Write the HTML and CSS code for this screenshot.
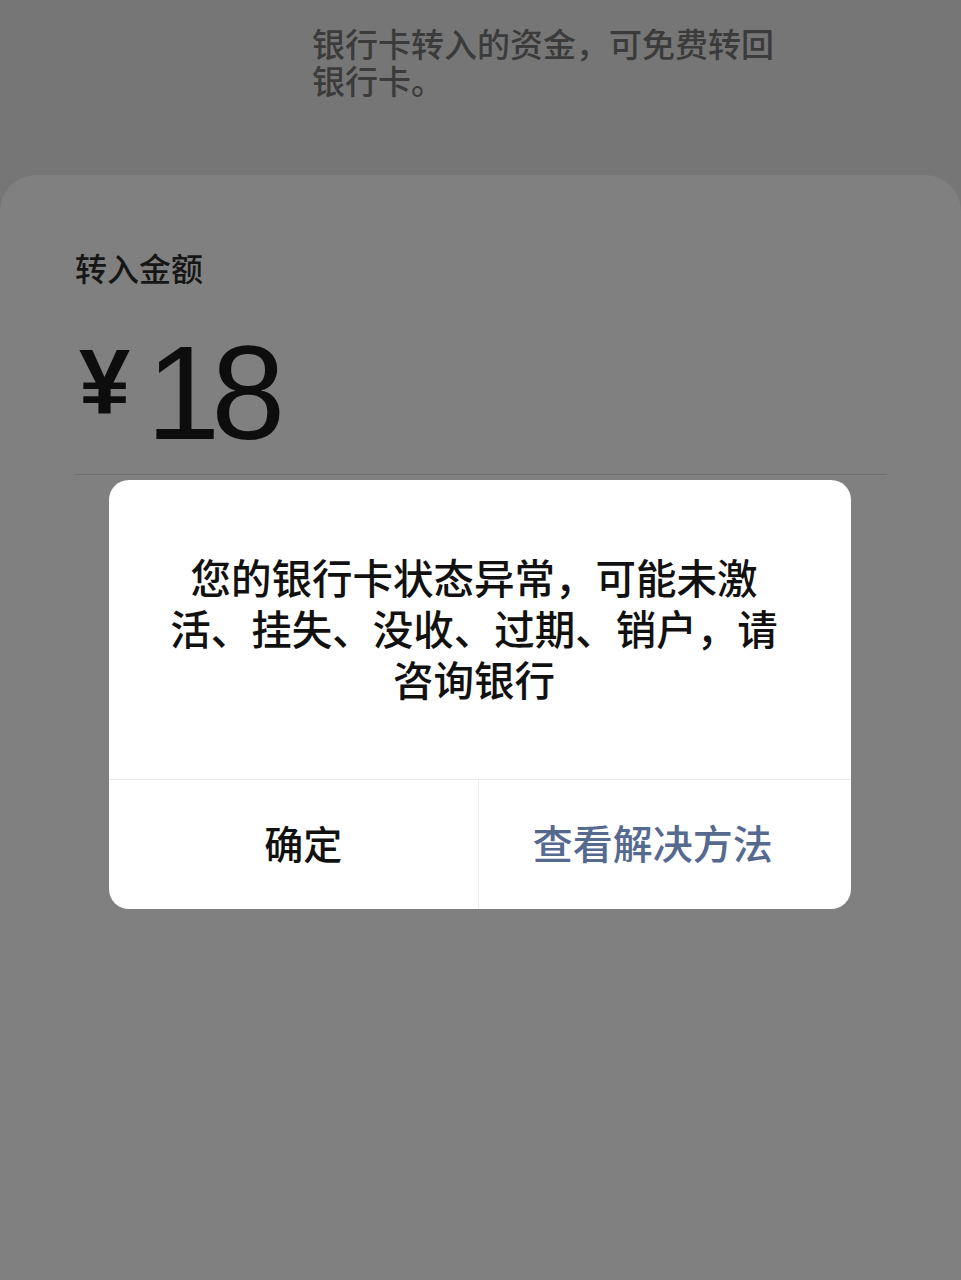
FILE: index.html
```html
<!DOCTYPE html>
<html lang="zh-CN">
<head>
<meta charset="utf-8">
<title>转入</title>
<link rel="stylesheet" href="styles.css">
</head>
<body>
<div class="page">
  <div class="top">
    <div class="note">银行卡转入的资金，可免费转回</div>
    <div class="note">银行卡。</div>
  </div>
  <div class="sheet">
    <div class="label">转入金额</div>
    <div class="amount"><span class="yen">¥</span><span class="num">18</span></div>
    <div class="divider"></div>
  </div>
  <div class="dialog">
    <div class="msg">您的银行卡状态异常，可能未激活、挂失、没收、过期、销户，请咨询银行</div>
    <div class="actions">
      <div class="btn ok">确定</div>
      <div class="btn link">查看解决方法</div>
    </div>
  </div>
</div>
</body>
</html>
```

FILE: styles.css
```css
html, body {
  margin: 0;
  padding: 0;
  background: #767676;
  font-family: "Noto Sans CJK SC", "Noto Sans", sans-serif;
}
.page {
  position: relative;
  width: 961px;
  height: 1280px;
  overflow: hidden;
  display: flex;
  flex-direction: column;
}
.top {
  height: 175px;
  box-sizing: border-box;
  padding: 25px 0 0 312px;
  display: flex;
  flex-direction: column;
}
.note {
  height: 37px;
  font-size: 33px;
  line-height: 37px;
  color: #3b3b3b;
  font-weight: 500;
  white-space: nowrap;
}
.sheet {
  flex: 1;
  background: #808080;
  border-radius: 36px 36px 0 0;
  padding: 72px 74px 0 75px;
}
.label {
  font-size: 32px;
  line-height: 40px;
  color: #161616;
  font-weight: 500;
}
.amount {
  margin-top: 40px;
  font-family: "Liberation Sans", Arial, sans-serif;
  font-size: 133px;
  line-height: 133px;
  color: #0d0d0d;
  white-space: nowrap;
}
.yen {
  font-weight: 700;
  font-size: 92px;
  line-height: 92px;
  vertical-align: 25px;
  margin-left: 4px;
  margin-right: 16px;
}
.num {
  letter-spacing: -9px;
}
.divider {
  margin-top: 14px;
  height: 1px;
  background: #6f6f6f;
}
.dialog {
  position: absolute;
  left: 109px;
  top: 480px;
  width: 742px;
  background: #ffffff;
  border-radius: 20px;
  overflow: hidden;
}
.msg {
  height: 299px;
  box-sizing: border-box;
  padding: 71px 66px 0 54px;
  text-align: center;
  font-size: 40.5px;
  line-height: 51px;
  font-weight: 500;
  color: #111111;
}
.actions {
  display: flex;
  height: 129px;
  border-top: 1px solid #e9e9e9;
}
.btn {
  flex: 1;
  display: flex;
  align-items: center;
  justify-content: center;
  font-weight: 500;
  padding-bottom: 6px;
}
.ok {
  font-size: 39px;
  color: #111111;
  border-right: 1px solid #ececec;
  padding-left: 20px;
}
.link {
  font-size: 40px;
  color: #56698f;
  padding-right: 24px;
}
```
